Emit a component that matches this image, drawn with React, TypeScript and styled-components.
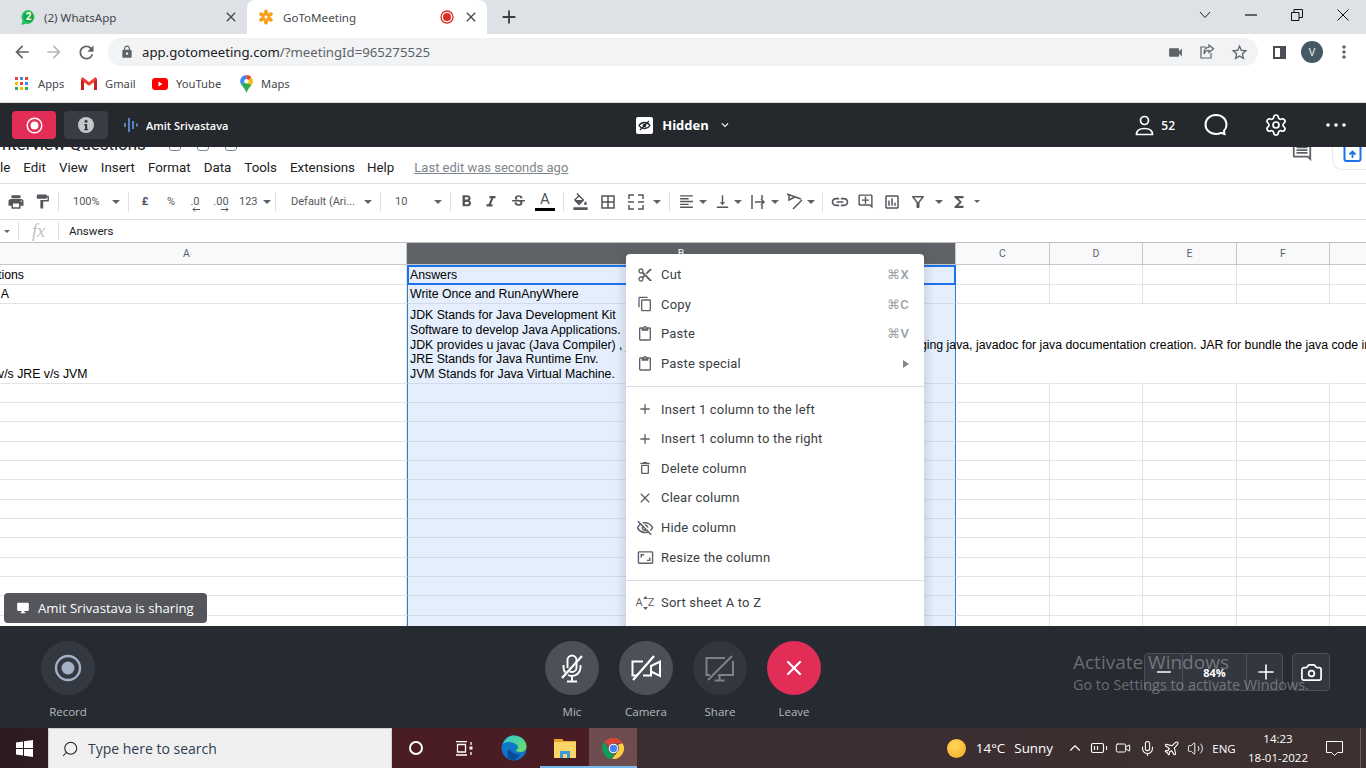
import React from "react";
import styled, { createGlobalStyle } from "styled-components";
import {
  MdArrowBack, MdArrowForward, MdRefresh, MdLock, MdVideocam, MdStarBorder, MdMoreVert, MdClose, MdAdd,
  MdPrint, MdFormatPaint, MdFormatBold, MdFormatItalic, MdStrikethroughS, MdFormatColorFill, MdBorderAll,
  MdFormatAlignLeft, MdVerticalAlignBottom, MdLink, MdOutlineAddComment, MdOutlineInsertChart, MdOutlineFilterAlt,
  MdFunctions, MdContentCut, MdOutlineContentCopy, MdOutlineContentPaste, MdOutlineDelete, MdOutlineVisibilityOff,
  MdOutlineAspectRatio, MdDesktopWindows, MdOutlineComment, MdKeyboardArrowDown,
} from "react-icons/md";
import { X, Minus, Plus, Camera, Settings, ChevronUp, Mic, Plane, Volume2, BatteryMedium, Video, Search } from "lucide-react";

const GlobalStyle = createGlobalStyle`
  html, body { margin: 0; padding: 0; background: #fff; overflow: hidden; }
  * { box-sizing: border-box; }
`;

const Page = styled.div`
  width: 1366px;
  height: 768px;
  overflow: hidden;
  position: relative;
  display: flex;
  flex-direction: column;
  font-family: "Roboto", "Liberation Sans", sans-serif;
`;

/* browser chrome */
const TabStrip = styled.div`
  height: 34px;
  background: #dee1e6;
  display: flex;
  align-items: stretch;
  padding-left: 7px;
  font-family: "Noto Sans", sans-serif;
  font-size: 11.6px;
  color: #45484d;
`;
const Tab = styled.div<{ $active?: boolean }>`
  width: 240px;
  display: flex;
  align-items: center;
  gap: ${(p) => (p.$active ? 9 : 7)}px;
  padding: 0 8px 0 ${(p) => (p.$active ? 11 : 13)}px;
  border-radius: 8px 8px 0 0;
  background: ${(p) => (p.$active ? "#fff" : "transparent")};
`;
const TabTitle = styled.span`
  flex: 1;
`;
const NewTab = styled.div`
  width: 44px;
  display: flex;
  align-items: center;
  justify-content: center;
  color: #3c4043;
`;
const WindowButtons = styled.div`
  margin-left: auto;
  display: flex;
  align-items: flex-start;
`;
const WindowButton = styled.div`
  width: 46px;
  height: 30px;
  display: flex;
  align-items: center;
  justify-content: center;
`;
const AddressRow = styled.div`
  height: 34px;
  background: #fff;
  display: flex;
  align-items: center;
  padding: 2px 0 0 6px;
  color: #5f6368;
`;
const NavButton = styled.div<{ $faded?: boolean }>`
  width: 32px;
  display: flex;
  justify-content: center;
  color: ${(p) => (p.$faded ? "#b4b7bb" : "#5f6368")};
`;
const UrlPill = styled.div`
  width: 1150px;
  height: 28px;
  margin-left: 6px;
  border-radius: 14px;
  background: #f1f3f4;
  display: flex;
  align-items: center;
  padding: 0 9px 0 12px;
  font-family: "Noto Sans", sans-serif;
  font-size: 13.2px;
  color: #5f6368;
`;
const UrlHost = styled.span`
  color: #202124;
  margin-left: 8px;
`;
const PillIcons = styled.div`
  margin-left: auto;
  display: flex;
  align-items: center;
  gap: 15px;
`;
const SidePanel = styled.div`
  width: 13px;
  height: 13px;
  margin-left: 15px;
  border: 2px solid #4a4d51;
  border-right-width: 6px;
`;
const Avatar = styled.div`
  width: 22px;
  height: 22px;
  margin-left: 15px;
  border-radius: 50%;
  background: #455a64;
  color: #e8eaed;
  font-size: 11px;
  display: flex;
  align-items: center;
  justify-content: center;
`;
const Kebab = styled.div`
  margin-left: 11px;
  display: flex;
`;
const BookmarkRow = styled.div`
  height: 35px;
  background: #fff;
  border-bottom: 1px solid #dadce0;
  display: flex;
  align-items: center;
  padding: 0 0 3px 15px;
  font-family: "Noto Sans", sans-serif;
  font-size: 11.2px;
  color: #44474b;
`;
const Bookmark = styled.div<{ $w: number }>`
  width: ${(p) => p.$w}px;
  display: flex;
  align-items: center;
  gap: 8px;
`;
const AppsGrid = styled.div`
  width: 15px;
  height: 14px;
  display: grid;
  grid-template-columns: repeat(3, 3px);
  grid-auto-rows: 3px;
  gap: 2px;
`;
const AppsDot = styled.i<{ $c: string }>`
  background: ${(p) => p.$c};
`;

/* meeting top bar */
const MeetingBar = styled.div`
  height: 44px;
  background: #25282d;
  display: grid;
  grid-template-columns: 1fr auto 1fr;
  align-items: center;
  padding: 0 20px 0 12px;
  color: #fff;
`;
const BarLeft = styled.div`
  display: flex;
  align-items: center;
  gap: 8px;
`;
const BarButton = styled.div<{ $red?: boolean }>`
  width: 44px;
  height: 28px;
  border-radius: 4px;
  background: ${(p) => (p.$red ? "#e22d56" : "#393c44")};
  display: flex;
  align-items: center;
  justify-content: center;
`;
const Speaker = styled.div`
  margin-left: 8px;
  display: flex;
  align-items: center;
  gap: 8px;
  font-family: "Open Sans", sans-serif;
  font-size: 11px;
  font-weight: 600;
`;
const HiddenPill = styled.div`
  margin-left: 10px;
  display: flex;
  align-items: center;
  gap: 9px;
  font-family: "Open Sans", sans-serif;
  font-size: 13px;
  font-weight: 700;
`;
const BarRight = styled.div`
  display: flex;
  align-items: center;
  justify-content: flex-end;
`;
const BarIcon = styled.div<{ $ml: number }>`
  margin-left: ${(p) => p.$ml}px;
  display: flex;
`;
const Count = styled.span`
  margin: 0 29px 0 7px;
  font-family: "Open Sans", sans-serif;
  font-size: 12px;
  font-weight: 600;
`;

/* spreadsheet */
const Sheet = styled.div`
  position: relative;
  flex: 1;
  height: 479px;
  overflow: hidden;
  background: #fff;
  color: #3c4043;
`;
const TitleStub = styled.div`
  height: 4px;
  overflow: hidden;
  display: flex;
  align-items: flex-end;
  padding-left: 2px;
  font-size: 16.9px;
  line-height: 14px;
  white-space: nowrap;
  color: #202124;
`;
const TitleMark = styled.div<{ $ml: number }>`
  flex: none;
  margin-left: ${(p) => p.$ml}px;
  width: 12px;
  height: 12px;
  border: 1.5px solid #80868b;
  border-radius: 3px;
`;
const MenuRow = styled.div`
  height: 33px;
  display: flex;
  align-items: center;
  border-bottom: 1px solid #e0e0e0;
  font-size: 13.35px;
  padding-top: 1px;
  color: #202124;
`;
const MenuItem = styled.span<{ $x: number }>`
  margin-left: ${(p) => p.$x}px;
`;
const LastEdit = styled.span`
  margin-left: 20px;
  color: #80868b;
  text-decoration: underline;
  font-size: 13px;
`;
const SheetCorner = styled.div`
  position: absolute;
  top: 0;
  right: 0;
  width: 34px;
  height: 23px;
  padding-left: 10px;
  background: #fff;
  border: 1px solid #e8eaed;
  border-top: 0;
  border-right: 0;
  border-radius: 0 0 0 10px;
  display: flex;
  align-items: flex-start;
`;
const CommentStub = styled.div`
  position: absolute;
  top: -6px;
  left: 1291px;
  color: #5f6368;
  display: flex;
`;
const Toolbar = styled.div`
  height: 36px;
  display: flex;
  align-items: center;
  padding-left: 4px;
  border-bottom: 1px solid #e0e0e0;
  font-size: 11px;
  color: #53575c;
`;
const Tool = styled.div<{ $w: number; $bold?: boolean }>`
  width: ${(p) => p.$w}px;
  flex: none;
  display: flex;
  align-items: center;
  justify-content: center;
  font-weight: ${(p) => (p.$bold ? 700 : 400)};
`;
const Drop = styled.div<{ $w: number; $l: number; $r?: number }>`
  width: ${(p) => p.$w}px;
  flex: none;
  display: flex;
  align-items: center;
  justify-content: space-between;
  padding: 0 ${(p) => p.$r ?? 6}px 0 ${(p) => p.$l}px;
`;
const Caret = styled.i<{ $small?: boolean }>`
  width: 0;
  height: 0;
  margin-left: 1px;
  border: ${(p) => (p.$small ? 3 : 4)}px solid transparent;
  border-top-color: #5f6368;
  border-bottom: 0;
`;
const Sep = styled.div<{ $w?: number }>`
  width: ${(p) => p.$w ?? 4}px;
  flex: none;
  display: flex;
  justify-content: center;
  &::after {
    content: "";
    width: 1px;
    height: 20px;
    background: #e0e0e0;
  }
`;
const Decimal = styled.div`
  display: flex;
  flex-direction: column;
  align-items: flex-end;
  line-height: 11px;
  margin-top: 4px;
`;
const TextColor = styled.span`
  display: flex;
  flex-direction: column;
  align-items: center;
  font-size: 15px;
  line-height: 15px;
  &::after {
    content: "";
    width: 20px;
    height: 3px;
    margin-top: 1px;
    background: #000;
  }
`;
const FormulaBar = styled.div`
  height: 23px;
  display: flex;
  align-items: center;
  border-bottom: 1px solid #c0c0c0;
  font-size: 11.5px;
  color: #202124;
`;
const Fx = styled.span`
  width: 41px;
  height: 18px;
  display: flex;
  align-items: center;
  justify-content: center;
  border-left: 1px solid #e0e0e0;
  border-right: 1px solid #e0e0e0;
  margin: 0 10px 0 5px;
  font-family: "Liberation Serif", serif;
  font-style: italic;
  font-size: 18px;
  color: #bdc1c6;
`;
const COLS = "440px 549px 94px 93px 94px 93px 60px";
const GridRow = styled.div<{ $h: number }>`
  margin-left: -33px;
  height: ${(p) => p.$h}px;
  display: grid;
  grid-template-columns: ${COLS};
`;
const HeadCell = styled.div<{ $on?: boolean }>`
  display: flex;
  align-items: center;
  justify-content: center;
  background: ${(p) => (p.$on ? "#5f6368" : "#f8f9fa")};
  color: ${(p) => (p.$on ? "#fff" : "#5f6368")};
  border-right: 1px solid #c7c7c7;
  border-bottom: 1px solid #c7c7c7;
  font-size: 10.5px;
`;
const Cell = styled.div<{ $on?: boolean; $active?: boolean; $first?: boolean; $open?: boolean }>`
  position: relative;
  display: flex;
  align-items: flex-end;
  white-space: pre;
  font-family: "Liberation Sans", sans-serif;
  font-size: 12.3px;
  line-height: 14.8px;
  color: #000;
  padding: 0 0 1px ${(p) => (p.$first ? 31 : 2)}px;
  background: ${(p) => (p.$on ? "#e4eefc" : "#fff")};
  border-bottom: 1px solid ${(p) => (p.$on ? "#d3dbe8" : "#e2e3e3")};
  border-right: 1px solid ${(p) => (p.$open ? "transparent" : "#e2e3e3")};
  ${(p) => p.$on && "border-left: 1px solid #2f7fc4; border-right: 1px solid #2f7fc4;"}
  ${(p) => p.$active && "border: 2px solid #1a73e8; padding: 0 0 0 1px;"}
`;
const CellLines = styled.div`
  position: relative;
  z-index: 1;
  align-self: flex-start;
  padding-top: 4px;
  width: 0;
`;

/* context menu */
const ContextMenu = styled.div`
  position: absolute;
  left: 626px;
  top: 107px;
  width: 298px;
  padding-top: 6px;
  background: #fff;
  border-radius: 4px;
  box-shadow: 0 2px 8px 3px rgba(60, 64, 67, 0.17);
  font-size: 13px;
  letter-spacing: 0.2px;
  color: #3c4043;
  z-index: 2;
`;
const Item = styled.div`
  height: 29.6px;
  display: flex;
  align-items: center;
  padding-right: 15px;
`;
const ItemIcon = styled.div`
  width: 35px;
  flex: none;
  display: flex;
  justify-content: center;
  padding-left: 3px;
  color: #5f6368;
`;
const Shortcut = styled.span`
  margin-left: auto;
  font-size: 13px;
  font-weight: 500;
  color: #9aa0a6;
`;
const SubArrow = styled.i`
  margin-left: auto;
  width: 0;
  height: 0;
  border: 4px solid transparent;
  border-left: 6px solid #80868b;
  border-right: 0;
`;
const Divider = styled.div`
  height: 1px;
  margin: 8px 0 7px;
  background: #dadce0;
`;
const SortGlyph = styled.span`
  display: flex;
  align-items: center;
  font-size: 11px;
  letter-spacing: 0;
  color: #5f6368;
`;
const ShareToast = styled.div`
  position: absolute;
  left: 4px;
  top: 446px;
  width: 203px;
  height: 30px;
  padding-left: 12px;
  display: flex;
  align-items: center;
  gap: 8px;
  border-radius: 4px;
  background: #54565b;
  color: #fff;
  font-family: "Open Sans", sans-serif;
  font-size: 13.15px;
  white-space: nowrap;
  z-index: 2;
`;

/* meeting controls */
const Controls = styled.div`
  height: 102px;
  background: #262a31;
  display: grid;
  grid-template-columns: 1fr auto 1fr;
  padding-top: 15px;
  color: #fff;
`;
const ControlGroup = styled.div`
  display: flex;
  gap: 20px;
`;
const RecordSlot = styled.div`
  padding-left: 41px;
`;
const Control = styled.div`
  width: 54px;
  display: flex;
  flex-direction: column;
  align-items: center;
  font-family: "Open Sans", sans-serif;
  font-size: 11.5px;
  color: #b7babf;
`;
const Round = styled.div<{ $tone: "dim" | "mid" | "red" | "off" }>`
  width: 54px;
  height: 54px;
  margin-bottom: 9px;
  border-radius: 50%;
  display: flex;
  align-items: center;
  justify-content: center;
  background: ${(p) => ({ dim: "#343840", mid: "#4c5159", red: "#e22d56", off: "#32363d" }[p.$tone])};
  color: ${(p) => (p.$tone === "off" ? "#7d8188" : "#fff")};
`;
const RightTools = styled.div`
  display: flex;
  align-items: flex-start;
  justify-content: flex-end;
  gap: 9px;
  padding: 12px 36px 0 0;
`;
const Zoomer = styled.div`
  width: 139px;
  height: 38px;
  display: grid;
  grid-template-columns: 37px 65px 37px;
  border: 1px solid #4b4f57;
  border-radius: 4px;
  background: #33373f;
  font-family: "Open Sans", sans-serif;
  font-size: 11px;
  font-weight: 700;
`;
const ZoomPart = styled.div<{ $mid?: boolean }>`
  display: flex;
  align-items: center;
  justify-content: center;
  ${(p) => p.$mid && "border-left: 1px solid #4b4f57; border-right: 1px solid #4b4f57;"}
`;
const SnapButton = styled.div`
  width: 38px;
  height: 38px;
  display: flex;
  align-items: center;
  justify-content: center;
  border: 1px solid #4b4f57;
  border-radius: 4px;
  background: #33373f;
`;
const Watermark = styled.div`
  position: absolute;
  left: 1073px;
  top: 650px;
  font-family: "Open Sans", sans-serif;
  color: rgba(255, 255, 255, 0.32);
  pointer-events: none;
`;
const WatermarkTitle = styled.div`
  font-size: 19px;
  line-height: 24px;
`;
const WatermarkText = styled.div`
  font-size: 14.4px;
  line-height: 21px;
`;

/* windows taskbar */
const Taskbar = styled.div`
  height: 40px;
  display: flex;
  align-items: center;
  background: linear-gradient(90deg, #2b1b23 0, #2f1b22 48px, #4a1c24 392px, #4a1c24 590px, #3b2d30 640px, #3d3031 100%);
  color: #fff;
`;
const StartButton = styled.div`
  width: 48px;
  display: flex;
  justify-content: center;
`;
const SearchBox = styled.div`
  width: 344px;
  height: 40px;
  display: flex;
  align-items: center;
  gap: 9px;
  padding-left: 12px;
  background: #f0f0f0;
  border: 1px solid #cfcfcf;
  border-bottom: 0;
  font-family: "Open Sans", sans-serif;
  font-size: 14px;
  color: #2c3e50;
`;
const SearchGlass = styled.div`
  display: flex;
  color: #222;
  transform: scaleX(-1);
`;
const TaskSlot = styled.div<{ $w: number; $active?: boolean; $open?: boolean }>`
  position: relative;
  width: ${(p) => p.$w}px;
  height: 40px;
  display: flex;
  align-items: center;
  justify-content: center;
  background: ${(p) => (p.$active ? "#6e4d51" : "transparent")};
  ${(p) => p.$open && "box-shadow: inset 0 -2px 0 #76b9ed;"}
`;
const CortanaRing = styled.div`
  width: 14px;
  height: 14px;
  border-radius: 50%;
  border: 2px solid #fff;
`;
const Tray = styled.div`
  margin-left: auto;
  display: flex;
  align-items: center;
  font-family: "Open Sans", sans-serif;
  font-size: 13.4px;
`;
const Weather = styled.div`
  display: flex;
  align-items: center;
  gap: 9px;
  margin-right: 10px;
`;
const Sun = styled.div`
  width: 19px;
  height: 19px;
  margin-right: 1px;
  border-radius: 50%;
  background: radial-gradient(circle at 40% 35%, #ffd95a, #f5a81c);
`;
const TrayIcon = styled.div`
  width: 24px;
  display: flex;
  justify-content: center;
`;
const Lang = styled.div`
  width: 34px;
  font-size: 11.5px;
  text-align: center;
`;
const Clock = styled.div`
  width: 60px;
  margin-left: 7px;
  white-space: nowrap;
  text-align: center;
  font-size: 11.5px;
  line-height: 19px;
`;
const Notify = styled.div`
  width: 53px;
  height: 40px;
  margin-right: 5px;
  display: flex;
  align-items: center;
  justify-content: center;
  border-right: 1px solid #6b5f60;
`;

const FlowerLogo = () => (
  <svg width="16" height="16" viewBox="0 0 16 16" fill="#f7a11a">
    {[0, 60, 120, 180, 240, 300].map((a) => (
      <ellipse key={a} cx="8" cy="3.6" rx="2" ry="3.2" transform={`rotate(${a} 8 8)`} />
    ))}
    <circle cx="8" cy="8" r="1.3" fill="#fff" />
  </svg>
);

const WhatsAppLogo = () => (
  <svg width="17" height="17" viewBox="0 0 17 17">
    <path d="M8.5 1a7 7 0 0 0-6 10.6L1.4 16l4.500-1.200A7 7 0 1 0 8.500 1z" fill="#25c65a" />
    <circle cx="8.500" cy="8" r="5.400" fill="#1aa84a" />
    <text x="8.500" y="11.400" fontSize="10" fontWeight="700" textAnchor="middle" fill="#fff" fontFamily="Roboto">2</text>
  </svg>
);

const RecordingDot = () => (
  <svg width="14" height="14" viewBox="0 0 14 14">
    <circle cx="7" cy="7" r="6" fill="#fff" stroke="#d93025" strokeWidth="1.300" />
    <circle cx="7" cy="7" r="4" fill="#d93025" />
  </svg>
);

const ChevronThin = () => (
  <svg width="12" height="8" viewBox="0 0 12 8" fill="none" stroke="#222"><path d="M1 1l5 5.500L11 1" /></svg>
);
const MinimizeGlyph = () => (
  <svg width="12" height="2" viewBox="0 0 12 2" stroke="#111" strokeWidth="1.200"><path d="M0 1h12" /></svg>
);
const RestoreGlyph = () => (
  <svg width="12" height="12" viewBox="0 0 12 12" fill="none" stroke="#111"><path d="M.5 3.500h7.500v8H.5zM3 3.500V.5h8.500v8H8" /></svg>
);
const CloseGlyph = () => (
  <svg width="12" height="12" viewBox="0 0 12 12" stroke="#111"><path d="M.5.500l11 11M11.500.5L.5 11.500" /></svg>
);

const ShareGlyph = () => (
  <svg width="16" height="16" viewBox="0 0 16 16" fill="none" stroke="#5f6368" strokeWidth="1.200">
    <path d="M7 3H2v11h10V9" />
    <path d="M10 1l4.500 3.800L10 8.500V6.300C7.500 6.300 6 7.500 5 10c0-4 2-6.500 5-6.800z" />
  </svg>
);

const GmailLogo = () => (
  <svg width="16" height="13" viewBox="0 0 16 13">
    <path d="M0 2v11h3V5.500L8 9l5-3.500V13h3V2l-1.500-2L8 5 1.500 0z" fill="#ea4335" />
    <path d="M0 2v11h3V5z" fill="#c5221f" />
    <path d="M16 2v11h-3V5z" fill="#c5221f" />
    <path d="M3 5.500V9l5 3.500L13 9V5.500L8 9z" fill="#fff" />
  </svg>
);

const YouTubeLogo = () => (
  <svg width="16" height="12" viewBox="0 0 16 12">
    <rect width="16" height="12" rx="3" fill="#f00" />
    <path d="M6.500 3.500v5l4-2.500z" fill="#fff" />
  </svg>
);

const MapsLogo = () => (
  <svg width="13" height="18" viewBox="0 0 13 18">
    <path d="M6.500 0A6.300 6.300 0 0 0 .2 6.300c0 1.500.5 2.700 1.300 3.800L6.500 4z" fill="#4285f4" />
    <path d="M1.500 10.100c1.900 2.500 4.100 4.600 5 7.900 1-3.500 3-5.300 4.900-7.800L6.500 4z" fill="#34a853" />
    <path d="M6.500 0c1.900 0 3.600.8 4.800 2.200L6.500 8z" fill="#ea4335" />
    <path d="M11.300 2.200a6.300 6.300 0 0 1 .1 8L6.500 8z" fill="#fbbc04" />
    <circle cx="6.500" cy="6.300" r="2.300" fill="#fff" />
  </svg>
);

const WindowsLogo = () => (
  <svg width="17" height="17" viewBox="0 0 17 17" fill="#fff">
    <path d="M0 2.400l7-1V8H0zM8 1.300L17 0v8H8zM0 9h7v6.600l-7-1zM8 9h9v8l-9-1.300z" />
  </svg>
);

const TaskViewGlyph = () => (
  <svg width="17" height="15" viewBox="0 0 17 15" fill="none" stroke="#fff" strokeWidth="1.300">
    <path d="M0 .7h11M1.500 3.500h8v7.500h-8zM0 14h11M15 1v3M15 11v3" />
    <rect x="13.500" y="5.500" width="3" height="3" fill="#fff" stroke="none" />
  </svg>
);

const EdgeLogo = () => (
  <svg width="26" height="26" viewBox="0 0 26 26">
    <defs>
      <linearGradient id="edgeA" x1="0" y1="0" x2="1" y2="1">
        <stop offset="0" stopColor="#2fc6d6" />
        <stop offset="1" stopColor="#6fe05f" />
      </linearGradient>
    </defs>
    <circle cx="13" cy="13" r="12.500" fill="#0f77c6" />
    <path d="M2 9C4 3 9 .5 13 .5c7 0 12.500 5 12.500 11 0 3.500-3 5.500-6.500 5.500-2.500 0-4-1-4.500-2 3-.5 3.500-3.500 1-5.500C12 6.500 5 6 2 9z" fill="url(#edgeA)" />
    <path d="M10 25C5.500 23 5 17 8.500 14c1.500 3 5 6 11 5.500-2 3.500-5.500 6-9.500 5.500z" fill="#0a4d96" />
  </svg>
);

const FolderLogo = () => (
  <svg width="22" height="20" viewBox="0 0 22 20">
    <path d="M0 1h8l2 2h12v3H0z" fill="#e5a82a" />
    <rect y="4" width="22" height="16" fill="#fbd566" />
    <path d="M6 20v-7h10v7h-3v-4H9v4z" fill="#3a9ae0" />
  </svg>
);

const ChromeLogo = () => (
  <svg width="23" height="23" viewBox="0 0 24 24">
    <path d="M12 1a11 11 0 0 1 9.500 5.500H12A5.500 5.500 0 0 0 6.800 10L3 4.800A11 11 0 0 1 12 1z" fill="#db4437" />
    <path d="M3 4.800L7.400 15A5.500 5.500 0 0 0 13.500 17.300L10.500 22.900A11 11 0 0 1 3 4.800z" fill="#0f9d58" />
    <path d="M21.500 6.500A11 11 0 0 1 10.500 22.900L16.700 14.800A5.500 5.500 0 0 0 16.500 8z" fill="#ffcd40" />
    <circle cx="12" cy="12" r="5" fill="#fff" />
    <circle cx="12" cy="12" r="3.900" fill="#4285f4" />
  </svg>
);

const SpeakerBars = () => (
  <svg width="14" height="14" viewBox="0 0 14 14" stroke="#6ea8fe" strokeWidth="1.400">
    <path d="M1 5v4M5 0v14M9 3v8M13 5.500v3" />
  </svg>
);

const RecordRing = ({ size, color }: { size: number; color: string }) => (
  <svg width={size} height={size} viewBox="0 0 28 28">
    <circle cx="14" cy="14" r="12" fill="none" stroke={color} strokeWidth="2.400" />
    <circle cx="14" cy="14" r="6.500" fill={color} />
  </svg>
);

const InfoBadge = () => (
  <svg width="16" height="16" viewBox="0 0 16 16">
    <circle cx="8" cy="8" r="8" fill="#c5c7ca" />
    <circle cx="8" cy="4.200" r="1.500" fill="#393c44" />
    <path d="M6.200 7h3v5h1v1.300H6V12h1V8.300h-.8z" fill="#393c44" />
  </svg>
);

const HiddenIcon = () => (
  <svg width="17" height="17" viewBox="0 0 17 17">
    <rect width="17" height="17" rx="2" fill="#fff" />
    <path d="M3 8.500c2.800-4 8.200-4 11 0-2.800 4-8.200 4-11 0z" fill="none" stroke="#25282d" strokeWidth="1.300" />
    <circle cx="8.500" cy="8.500" r="1.800" fill="#25282d" />
    <path d="M4 13L13 4" stroke="#25282d" strokeWidth="1.300" />
  </svg>
);

const PersonIcon = () => (
  <svg width="19" height="21" viewBox="0 0 19 21" fill="none" stroke="#fff" strokeWidth="1.700">
    <circle cx="9.500" cy="5.500" r="4" />
    <path d="M1.500 19.500c0-4 3.500-6 8-6s8 2 8 6z" />
  </svg>
);

const ChatIcon = () => (
  <svg width="24" height="24" viewBox="0 0 24 24" fill="none" stroke="#fff" strokeWidth="2">
    <path d="M12 2c6 0 10.500 4 10.500 9.500 0 2.800-1 4.800-2.500 6.300l.5 3.200-3.500-1.200c-1.500.8-3.200 1.200-5 1.200C6 21 1.500 17 1.500 11.500S6 2 12 2z" />
  </svg>
);

const ThreeDots = () => (
  <svg width="20" height="4" viewBox="0 0 20 4" fill="#fff">
    <circle cx="2" cy="2" r="1.800" />
    <circle cx="10" cy="2" r="1.800" />
    <circle cx="18" cy="2" r="1.800" />
  </svg>
);

const MergeIcon = () => (
  <svg width="18" height="18" viewBox="0 0 18 18" fill="none" stroke="#53575c" strokeWidth="1.500">
    <path d="M2 6V2h5M11 2h5v4M2 12v4h5M11 16h5v-4M1 9h6M11 9h6" />
  </svg>
);

const WrapIcon = () => (
  <svg width="18" height="18" viewBox="0 0 18 18" fill="none" stroke="#53575c" strokeWidth="1.500">
    <path d="M2 2v14M12 2v4M12 12v4M5 9h9M11 6l3 3-3 3" />
  </svg>
);

const RotateIcon = () => (
  <svg width="20" height="18" viewBox="0 0 20 18" fill="none" stroke="#53575c" strokeWidth="1.500">
    <path d="M2 1l14 5M4 1.500V7l6-3M8 16l9-9" />
  </svg>
);

const DecimalArrow = ({ right }: { right?: boolean }) => (
  <svg width="8" height="5" viewBox="0 0 8 5" fill="none" stroke="#53575c">
    <path d={right ? "M0 2.500h7M5 .5l2 2-2 2" : "M8 2.500H1M3 .5l-2 2 2 2"} />
  </svg>
);

const BlueUpload = () => (
  <svg width="19" height="15" viewBox="0 0 19 15">
    <path d="M1.500 0v12a2 2 0 0 0 2 2h12a2 2 0 0 0 2-2V0" fill="none" stroke="#1a73e8" strokeWidth="2" />
    <path d="M9.500 11V5M6.500 7.500l3-3 3 3" fill="none" stroke="#1a73e8" strokeWidth="1.800" />
  </svg>
);

const SortArrows = () => (
  <svg width="5" height="14" viewBox="0 0 5 14" fill="#5f6368">
    <path d="M2.500 0L5 3H0zM2.500 14L0 11h5z" />
  </svg>
);

const MicSlash = () => (
  <svg width="24" height="29" viewBox="0 0 24 29" fill="none" stroke="#fff" strokeWidth="1.900">
    <path d="M7.500 14V6a4.500 4.500 0 0 1 9 0v7.500a4.500 4.500 0 0 1-4.500 4.500c-1 0-1.800-.3-2.500-.8" />
    <path d="M3.500 11v2.500c0 2 .7 3.700 2 5M20.500 11v2.500c0 4.700-3.800 8.500-8.500 8.500-1.500 0-2.800-.3-4-1" />
    <path d="M12 22v4.500M7 27.500h10" />
    <path d="M22 2L2 24" strokeWidth="2.200" />
  </svg>
);

const CamSlash = () => (
  <svg width="31" height="26" viewBox="0 0 31 26" fill="none" stroke="#fff" strokeWidth="2">
    <path d="M12 6.500H1.500v14H6M12 20.500h8V10" />
    <path d="M20 11l9-4.500v14.500l-9-4.500" />
    <path d="M23 1L2 25" strokeWidth="2.200" />
  </svg>
);

const ScreenSlash = () => (
  <svg width="30" height="27" viewBox="0 0 30 27" fill="none" stroke="currentColor" strokeWidth="2">
    <path d="M20 3H1.500v17H5M13 20h15V6" />
    <path d="M14.500 20v5M9.500 25.500h10" />
    <path d="M27 1L3 25" strokeWidth="2.200" />
  </svg>
);

const TOP_MENU: [string, number][] = [
  ["le", 0], ["Edit", 13], ["View", 13], ["Insert", 13], ["Format", 13], ["Data", 13], ["Tools", 13], ["Extensions", 13], ["Help", 12],
];
const APP_COLORS = ["#ea4335", "#4285f4", "#ea4335", "#fbbc04", "#ea4335", "#4285f4", "#34a853", "#fbbc04", "#34a853"];
const COL_LABELS = ["C", "D", "E", "F", ""];
const EMPTY_ROWS = Array.from({ length: 13 }, (_, i) => i);
const JDK_LINES = [
  "JDK Stands for Java Development Kit",
  "Software to develop Java Applications.",
  "JDK provides u javac (Java Compiler) , java for running all the java applications, jdb for debugging java, javadoc for java documentation creation. JAR for bundle the java code in",
  "JRE Stands for Java Runtime Env.",
  "JVM Stands for Java Virtual Machine.",
];

function SheetRow({ h, a, b, active, open, children }: { h: number; a?: string; b?: string; active?: boolean; open?: boolean; children?: React.ReactNode }) {
  return (
    <GridRow $h={h}>
      <Cell $first>{a}</Cell>
      <Cell $on $active={active}>{children ?? b}</Cell>
      {COL_LABELS.map((c, i) => <Cell key={i} $open={open} />)}
    </GridRow>
  );
}

export default function App() {
  return (
    <Page>
      <GlobalStyle />
      <TabStrip>
        <Tab>
          <WhatsAppLogo />
          <TabTitle>(2) WhatsApp</TabTitle>
          <MdClose size={16} />
        </Tab>
        <Tab $active>
          <FlowerLogo />
          <TabTitle>GoToMeeting</TabTitle>
          <RecordingDot />
          <MdClose size={16} />
        </Tab>
        <NewTab><MdAdd size={22} /></NewTab>
        <WindowButtons>
          <WindowButton><ChevronThin /></WindowButton>
          <WindowButton><MinimizeGlyph /></WindowButton>
          <WindowButton><RestoreGlyph /></WindowButton>
          <WindowButton><CloseGlyph /></WindowButton>
        </WindowButtons>
      </TabStrip>

      <AddressRow>
        <NavButton><MdArrowBack size={20} /></NavButton>
        <NavButton $faded><MdArrowForward size={20} /></NavButton>
        <NavButton><MdRefresh size={21} /></NavButton>
        <UrlPill>
          <MdLock size={14} />
          <UrlHost>app.gotomeeting.com</UrlHost>/?meetingId=965275525
          <PillIcons>
            <MdVideocam size={17} />
            <ShareGlyph />
            <MdStarBorder size={19} />
          </PillIcons>
        </UrlPill>
        <SidePanel />
        <Avatar>V</Avatar>
        <Kebab><MdMoreVert size={20} /></Kebab>
      </AddressRow>

      <BookmarkRow>
        <Bookmark $w={66}>
          <AppsGrid>{APP_COLORS.map((c, i) => <AppsDot key={i} $c={c} />)}</AppsGrid>
          Apps
        </Bookmark>
        <Bookmark $w={71}><GmailLogo />Gmail</Bookmark>
        <Bookmark $w={88}><YouTubeLogo />YouTube</Bookmark>
        <Bookmark $w={70}><MapsLogo />Maps</Bookmark>
      </BookmarkRow>

      <MeetingBar>
        <BarLeft>
          <BarButton $red><RecordRing size={17} color="#fff" /></BarButton>
          <BarButton><InfoBadge /></BarButton>
          <Speaker><SpeakerBars />Amit Srivastava</Speaker>
        </BarLeft>
        <HiddenPill>
          <HiddenIcon />
          Hidden
          <MdKeyboardArrowDown size={14} />
        </HiddenPill>
        <BarRight>
          <PersonIcon />
          <Count>52</Count>
          <ChatIcon />
          <BarIcon $ml={36}><Settings size={24} strokeWidth={1.7} /></BarIcon>
          <BarIcon $ml={38}><ThreeDots /></BarIcon>
        </BarRight>
      </MeetingBar>

      <Sheet>
        <TitleStub>
          nterview Questions
          <TitleMark $ml={23} />
          <TitleMark $ml={16} />
          <TitleMark $ml={16} />
        </TitleStub>
        <MenuRow>
          {TOP_MENU.map(([t, x]) => <MenuItem key={t} $x={x}>{t}</MenuItem>)}
          <LastEdit>Last edit was seconds ago</LastEdit>
        </MenuRow>
        <CommentStub><MdOutlineComment size={22} /></CommentStub>
        <SheetCorner><BlueUpload /></SheetCorner>

        <Toolbar>
          <Tool $w={24}><MdPrint size={18} /></Tool>
          <Tool $w={28}><MdFormatPaint size={17} /></Tool>
          <Sep />
          <Drop $w={66} $l={13}>100%<Caret /></Drop>
          <Sep />
          <Tool $w={30} $bold>£</Tool>
          <Tool $w={22}>%</Tool>
          <Tool $w={26}><Decimal>.0<DecimalArrow /></Decimal></Tool>
          <Tool $w={26}><Decimal>.00<DecimalArrow right /></Decimal></Tool>
          <Drop $w={39} $l={5} $r={2}>123<Caret /></Drop>
          <Sep />
          <Drop $w={101} $l={14}>Default (Ari...<Caret /></Drop>
          <Sep />
          <Drop $w={66} $l={13}>10<Caret /></Drop>
          <Sep />
          <Tool $w={28}><MdFormatBold size={19} /></Tool>
          <Tool $w={22}><MdFormatItalic size={18} /></Tool>
          <Tool $w={32}><MdStrikethroughS size={17} /></Tool>
          <Tool $w={22}><TextColor>A</TextColor></Tool>
          <Sep $w={14} />
          <Tool $w={20}><MdFormatColorFill size={17} /></Tool>
          <Tool $w={36}><MdBorderAll size={18} /></Tool>
          <Drop $w={41} $l={1}><MergeIcon /><Caret /></Drop>
          <Sep />
          <Drop $w={37} $l={7} $r={1}><MdFormatAlignLeft size={17} /><Caret /></Drop>
          <Drop $w={35} $l={6} $r={1}><MdVerticalAlignBottom size={17} /><Caret /></Drop>
          <Drop $w={37} $l={7} $r={1}><WrapIcon /><Caret /></Drop>
          <Drop $w={36} $l={5} $r={1}><RotateIcon /><Caret /></Drop>
          <Sep $w={12} />
          <Tool $w={24}><MdLink size={20} /></Tool>
          <Tool $w={26}><MdOutlineAddComment size={17} /></Tool>
          <Tool $w={28}><MdOutlineInsertChart size={18} /></Tool>
          <Tool $w={24}><MdOutlineFilterAlt size={18} /></Tool>
          <Tool $w={16}><Caret /></Tool>
          <Tool $w={26}><MdFunctions size={18} /></Tool>
          <Tool $w={8}><Caret $small /></Tool>
        </Toolbar>

        <FormulaBar>
          <Tool $w={13}><Caret $small /></Tool>
          <Fx>fx</Fx>
          Answers
        </FormulaBar>

        <GridRow $h={22}>
          <HeadCell>A</HeadCell>
          <HeadCell $on>B</HeadCell>
          {COL_LABELS.map((c, i) => <HeadCell key={i}>{c}</HeadCell>)}
        </GridRow>
        <SheetRow h={19.5} a="tions" b="Answers" active />
        <SheetRow h={19.5} a=" A" b="Write Once and RunAnyWhere" />
        <SheetRow h={79.5} a="v/s JRE v/s JVM" open>
          <CellLines>{JDK_LINES.map((l) => <div key={l}>{l}</div>)}</CellLines>
        </SheetRow>
        {EMPTY_ROWS.map((i) => <SheetRow key={i} h={19.35} />)}

        <ContextMenu>
          <Item><ItemIcon><MdContentCut size={16} /></ItemIcon>Cut<Shortcut>⌘X</Shortcut></Item>
          <Item><ItemIcon><MdOutlineContentCopy size={16} /></ItemIcon>Copy<Shortcut>⌘C</Shortcut></Item>
          <Item><ItemIcon><MdOutlineContentPaste size={16} /></ItemIcon>Paste<Shortcut>⌘V</Shortcut></Item>
          <Item><ItemIcon><MdOutlineContentPaste size={16} /></ItemIcon>Paste special<SubArrow /></Item>
          <Divider />
          <Item><ItemIcon><MdAdd size={16} /></ItemIcon>Insert 1 column to the left</Item>
          <Item><ItemIcon><MdAdd size={16} /></ItemIcon>Insert 1 column to the right</Item>
          <Item><ItemIcon><MdOutlineDelete size={16} /></ItemIcon>Delete column</Item>
          <Item><ItemIcon><MdClose size={16} /></ItemIcon>Clear column</Item>
          <Item><ItemIcon><MdOutlineVisibilityOff size={18} /></ItemIcon>Hide column</Item>
          <Item><ItemIcon><MdOutlineAspectRatio size={17} /></ItemIcon>Resize the column</Item>
          <Divider />
          <Item><ItemIcon><SortGlyph>A<SortArrows />Z</SortGlyph></ItemIcon>Sort sheet A to Z</Item>
          <Item />
        </ContextMenu>

        <ShareToast><MdDesktopWindows size={14} />Amit Srivastava is sharing</ShareToast>
      </Sheet>

      <Controls>
        <RecordSlot>
          <Control>
            <Round $tone="dim"><RecordRing size={28} color="#a3b1c6" /></Round>
            Record
          </Control>
        </RecordSlot>
        <ControlGroup>
          <Control><Round $tone="mid"><MicSlash /></Round>Mic</Control>
          <Control><Round $tone="mid"><CamSlash /></Round>Camera</Control>
          <Control><Round $tone="off"><ScreenSlash /></Round>Share</Control>
          <Control><Round $tone="red"><X size={24} strokeWidth={2.2} /></Round>Leave</Control>
        </ControlGroup>
        <RightTools>
          <Zoomer>
            <ZoomPart><Minus size={22} strokeWidth={1.6} /></ZoomPart>
            <ZoomPart $mid>84%</ZoomPart>
            <ZoomPart><Plus size={24} strokeWidth={1.6} /></ZoomPart>
          </Zoomer>
          <SnapButton><Camera size={23} strokeWidth={1.8} /></SnapButton>
        </RightTools>
      </Controls>

      <Watermark>
        <WatermarkTitle>Activate Windows</WatermarkTitle>
        <WatermarkText>Go to Settings to activate Windows.</WatermarkText>
      </Watermark>

      <Taskbar>
        <StartButton><WindowsLogo /></StartButton>
        <SearchBox>
          <SearchGlass><Search size={18} strokeWidth={1.4} /></SearchGlass>
          Type here to search
        </SearchBox>
        <TaskSlot $w={48}><CortanaRing /></TaskSlot>
        <TaskSlot $w={48}><TaskViewGlyph /></TaskSlot>
        <TaskSlot $w={52}><EdgeLogo /></TaskSlot>
        <TaskSlot $w={49} $open><FolderLogo /></TaskSlot>
        <TaskSlot $w={48} $active $open><ChromeLogo /></TaskSlot>
        <Tray>
          <Weather>
            <Sun />
            <span>14°C</span>
            <span>Sunny</span>
          </Weather>
          <TrayIcon><ChevronUp size={18} strokeWidth={1.5} /></TrayIcon>
          <TrayIcon><BatteryMedium size={18} strokeWidth={1.5} /></TrayIcon>
          <TrayIcon><Video size={16} strokeWidth={1.5} /></TrayIcon>
          <TrayIcon><Mic size={17} strokeWidth={1.5} /></TrayIcon>
          <TrayIcon><Plane size={17} strokeWidth={1.5} /></TrayIcon>
          <TrayIcon><Volume2 size={17} strokeWidth={1.3} /></TrayIcon>
          <Lang>ENG</Lang>
          <Clock>14:23<br />18-01-2022</Clock>
          <Notify><svg width="17" height="15" viewBox="0 0 17 15" fill="none" stroke="#fff"><path d="M.5.500h16v11h-5l-3 3-3-3h-5z" /></svg></Notify>
        </Tray>
      </Taskbar>
    </Page>
  );
}
